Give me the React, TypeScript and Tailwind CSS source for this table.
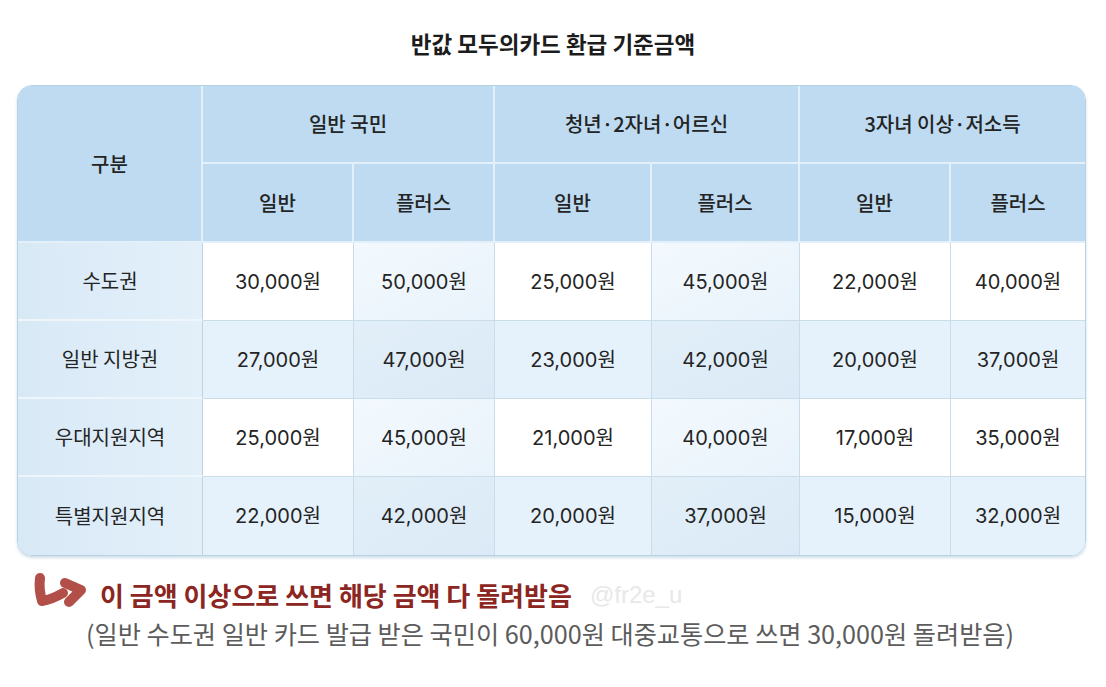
import React from 'react';

const groups = ['일반 국민', '청년·2자녀·어르신', '3자녀 이상·저소득'];

const rows = [
  { name: '수도권', values: ['30,000원', '50,000원', '25,000원', '45,000원', '22,000원', '40,000원'] },
  { name: '일반 지방권', values: ['27,000원', '47,000원', '23,000원', '42,000원', '20,000원', '37,000원'] },
  { name: '우대지원지역', values: ['25,000원', '45,000원', '21,000원', '40,000원', '17,000원', '35,000원'] },
  { name: '특별지원지역', values: ['22,000원', '42,000원', '20,000원', '37,000원', '15,000원', '32,000원'] },
];

function cellBg(row: number, col: number) {
  const even = row % 2 === 1;
  const tinted = col === 1 || col === 3;
  if (even) return tinted ? 'bg-gradient-to-br from-[#e2eff9] to-[#dbeaf6]' : 'bg-[#e6f2fb]';
  return tinted ? 'bg-gradient-to-br from-[#f3f9fe] to-[#e9f3fb]' : 'bg-white';
}

function HookArrow() {
  return (
    <svg width="56" height="40" viewBox="0 0 56 40" className="shrink-0 -mt-[7px]">
      <path
        d="M8 7 C7 15 8 23 10 30 C17 29 24 26 31 22"
        fill="none"
        stroke="#b24f48"
        strokeWidth="10"
        strokeLinecap="round"
        strokeLinejoin="round"
      />
      <path
        d="M33 12 L49 19 L37 31"
        fill="none"
        stroke="#b24f48"
        strokeWidth="10"
        strokeLinecap="round"
        strokeLinejoin="round"
      />
    </svg>
  );
}

export default function App() {
  return (
    <div
      className="w-[1106px] h-[687px] bg-white overflow-hidden"
      style={{ fontFamily: "'Noto Sans CJK KR', 'Noto Sans', sans-serif" }}
    >
      {/* Title */}
      <div className="pt-[28px]">
        <h1 className="h-[30px] text-center text-[22.5px] leading-[30px] font-bold text-[#1c1c1c]">
          반값 모두의카드 환급 기준금액
        </h1>
      </div>

      {/* Table */}
      <div className="mt-[27px] ml-[17px] w-[1069px] rounded-[15px] border border-[#b8d2e5] overflow-hidden shadow-[0_2px_3px_rgba(120,160,190,0.35)]">
        <div className="grid grid-cols-[185px_151px_141px_157px_148px_151px_134px] grid-rows-[78px_79px_78px_78px_78px_78px] text-[#242424]">
          <div className="row-span-2 flex items-center justify-center bg-[#bedbf1] border-r-2 border-b-2 border-[#e4f0f9] text-[20px] font-medium">
            구분
          </div>
          {groups.map((g, i) => (
            <div
              key={g}
              className={`col-span-2 flex items-center justify-center bg-[#bedbf1] border-b-2 border-[#e4f0f9] text-[20px] font-medium ${i < 2 ? 'border-r-2' : ''}`}
            >
              {g}
            </div>
          ))}
          {[0, 1, 2, 3, 4, 5].map((i) => (
            <div
              key={i}
              className={`flex items-center justify-center bg-[#bedbf1] border-b-2 border-[#e4f0f9] text-[20px] font-medium ${i < 5 ? 'border-r-2' : ''}`}
            >
              {i % 2 === 0 ? '일반' : '플러스'}
            </div>
          ))}

          {rows.map((r, ri) => (
            <React.Fragment key={r.name}>
              <div
                className={`flex items-center justify-center bg-gradient-to-r from-[#d8e9f6] to-[#e3f0fa] border-r border-[#bcd3e5] text-[20px] ${ri < 3 ? 'border-b-2 border-b-[#eef6fc]' : ''}`}
              >
                {r.name}
              </div>
              {r.values.map((v, ci) => (
                <div
                  key={ci}
                  className={`flex items-center justify-center text-[20px] border-[#c8dcea] ${cellBg(ri, ci)} ${ci < 5 ? 'border-r' : ''} ${ri < 3 ? 'border-b' : ''}`}
                  style={{ fontFamily: "Inter, 'Noto Sans CJK KR', sans-serif" }}
                >
                  {v}
                </div>
              ))}
            </React.Fragment>
          ))}
        </div>
      </div>

      {/* Notes */}
      <div className="mt-[22px] h-[34px] flex items-start pl-[32px]">
        <HookArrow />
        <span className="ml-[12px] text-[26px] leading-[34px] font-bold text-[#8c2622]">
          이 금액 이상으로 쓰면 해당 금액 다 돌려받음
        </span>
        <span
          className="ml-[18px] text-[24px] leading-[34px] text-[#e8e8e8]"
          style={{ fontFamily: "'Liberation Sans', sans-serif" }}
        >
          @fr2e_u
        </span>
      </div>
      <p className="mt-[4px] pl-[86px] h-[34px] text-[25.2px] leading-[34px] text-[#5c5c5c]">
        (일반 수도권 일반 카드 발급 받은 국민이 60,000원 대중교통으로 쓰면 30,000원 돌려받음)
      </p>
    </div>
  );
}
